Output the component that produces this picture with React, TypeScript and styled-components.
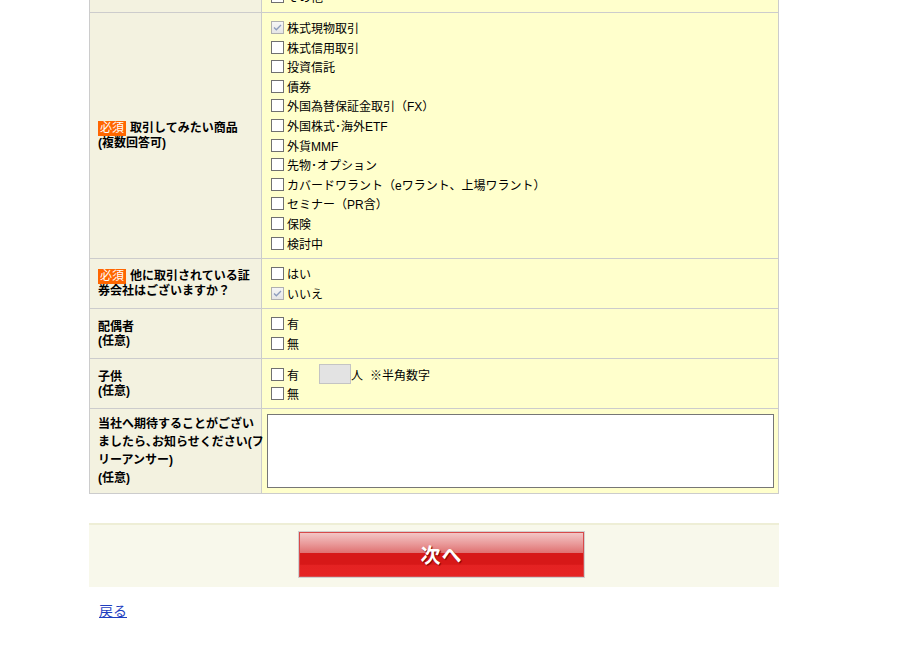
import React from 'react';
import styled, { createGlobalStyle } from 'styled-components';

const GlobalStyle = createGlobalStyle`
  html, body {
    margin: 0;
    padding: 0;
    background: #ffffff;
  }
  body {
    font-family: "Liberation Sans", "Noto Sans CJK JP", sans-serif;
    font-size: 12px;
    color: #000000;
  }
`;

// the page is shown scrolled down, so the first row is partly above the fold
const Page = styled.div`
  width: 690px;
  margin: -58px 0 0 89px;
  padding-bottom: 30px;
`;

const FormTable = styled.table`
  width: 690px;
  border-collapse: collapse;
  table-layout: fixed;
  border: 1px solid #cccccc;
`;

const LabelCol = styled.col`
  width: 172px;
`;

const Label = styled.th<{ $lh?: number; $nowrap?: boolean }>`
  padding: 0 8px;
  background: #f3f2e0;
  border: 1px solid #cccccc;
  text-align: left;
  vertical-align: middle;
  font-weight: bold;
  line-height: ${(p) => p.$lh ?? 14}px;
  white-space: ${(p) => (p.$nowrap ? 'nowrap' : 'normal')};
`;

const Value = styled.td`
  padding: 5px;
  background: #ffffcc;
  border: 1px solid #cccccc;
  vertical-align: top;
`;

const Badge = styled.span`
  display: inline-block;
  padding: 1px 2px;
  margin-right: 4px;
  background: #ff6600;
  color: #ffffff;
  font-weight: normal;
  line-height: 13px;
`;

const Option = styled.label`
  display: flex;
  align-items: center;
  height: 19.6px;
  white-space: nowrap;
`;

const Box = styled.span<{ $checked?: boolean }>`
  flex: none;
  width: 13px;
  height: 13px;
  box-sizing: border-box;
  margin: 0 3px 0 4px;
  border: 1px solid ${(p) => (p.$checked ? '#b0b0b0' : '#707070')};
  background: ${(p) => (p.$checked ? 'linear-gradient(#f6f6f6, #e6e6e6)' : '#ffffff')};
  display: flex;
  align-items: center;
  justify-content: center;

  svg {
    display: block;
  }
`;

const NumInput = styled.input`
  width: 32px;
  height: 20px;
  box-sizing: border-box;
  margin: 0 0 0 20px;
  padding: 0;
  border: 1px solid #c4c4c4;
  background: #e3e3e3;
`;

const Note = styled.span`
  margin-left: 7px;
`;

const Memo = styled.textarea`
  display: block;
  width: 507px;
  height: 74px;
  box-sizing: border-box;
  margin: 0;
  border: 1px solid #767676;
  background: #ffffff;
  resize: none;
`;

const ButtonBar = styled.div`
  margin-top: 29px;
  height: 64px;
  box-sizing: border-box;
  padding-top: 6px;
  border-top: 2px solid #eeeed6;
  background: #f8f8eb;
  display: flex;
  justify-content: center;
  align-items: flex-start;
`;

const NextButton = styled.button`
  width: 287px;
  height: 47px;
  margin-left: 15px;
  padding: 0;
  border: 1px solid #d0d0d0;
  box-shadow: inset 0 0 0 1px #d84a4a;
  background: linear-gradient(
    to bottom,
    #f3caca 0%,
    #ea9c9c 25%,
    #df7272 46%,
    #d71818 47%,
    #d71818 72%,
    #e42222 73%,
    #e62424 100%
  );
  color: #ffffff;
  font-family: "Noto Sans CJK JP", sans-serif;
  font-size: 20px;
  font-weight: bold;
  letter-spacing: 1px;
  text-shadow: 1px 1px 1px #7a0000;
  cursor: pointer;
`;

const BackLink = styled.a`
  display: inline-block;
  margin: 13px 0 0 10px;
  font-family: "Noto Sans CJK JP", sans-serif;
  font-size: 14px;
  line-height: 20px;
  color: #1f3fbf;
  text-decoration: underline;
`;

function Check({ label, checked }: { label: React.ReactNode; checked?: boolean }) {
  return (
    <Option>
      <Box $checked={checked}>
        {checked && (
          <svg width="11" height="11" viewBox="0 0 11 11">
            <path d="M2 5.5 L4.3 7.8 L9 3" fill="none" stroke="#8c9cbc" strokeWidth="1.3" />
          </svg>
        )}
      </Box>
      {label}
    </Option>
  );
}

const products = [
  '株式現物取引',
  '株式信用取引',
  '投資信託',
  '債券',
  '外国為替保証金取引（FX）',
  '外国株式･海外ETF',
  '外貨MMF',
  '先物･オプション',
  'カバードワラント（eワラント、上場ワラント）',
  'セミナー（PR含）',
  '保険',
  '検討中',
];

export default function App() {
  return (
    <>
      <GlobalStyle />
      <Page>
        <FormTable>
          <colgroup>
            <LabelCol />
            <col />
          </colgroup>
          <tbody>
            <tr>
              <Label>
                ご職業
                <br />
                (任意)
              </Label>
              <Value>
                <Check label="会社員" />
                <Check label="自営業" />
                <Check label="その他" />
              </Value>
            </tr>
            <tr>
              <Label>
                <Badge>必須</Badge>取引してみたい商品
                <br />
                (複数回答可)
              </Label>
              <Value>
                {products.map((p, i) => (
                  <Check key={p} label={p} checked={i === 0} />
                ))}
              </Value>
            </tr>
            <tr>
              <Label $lh={15}>
                <Badge>必須</Badge>他に取引されている証券会社はございますか？
              </Label>
              <Value>
                <Check label="はい" />
                <Check label="いいえ" checked />
              </Value>
            </tr>
            <tr>
              <Label>
                配偶者
                <br />
                (任意)
              </Label>
              <Value>
                <Check label="有" />
                <Check label="無" />
              </Value>
            </tr>
            <tr>
              <Label>
                子供
                <br />
                (任意)
              </Label>
              <Value>
                <Check
                  label={
                    <>
                      有<NumInput type="text" />人<Note>※半角数字</Note>
                    </>
                  }
                />
                <Check label="無" />
              </Value>
            </tr>
            <tr>
              <Label $lh={18} $nowrap>
                当社へ期待することがござい
                <br />
                ましたら､お知らせください(フ
                <br />
                リーアンサー)
                <br />
                (任意)
              </Label>
              <Value>
                <Memo />
              </Value>
            </tr>
          </tbody>
        </FormTable>
        <ButtonBar>
          <NextButton type="button">次へ</NextButton>
        </ButtonBar>
        <BackLink href="#">戻る</BackLink>
      </Page>
    </>
  );
}
